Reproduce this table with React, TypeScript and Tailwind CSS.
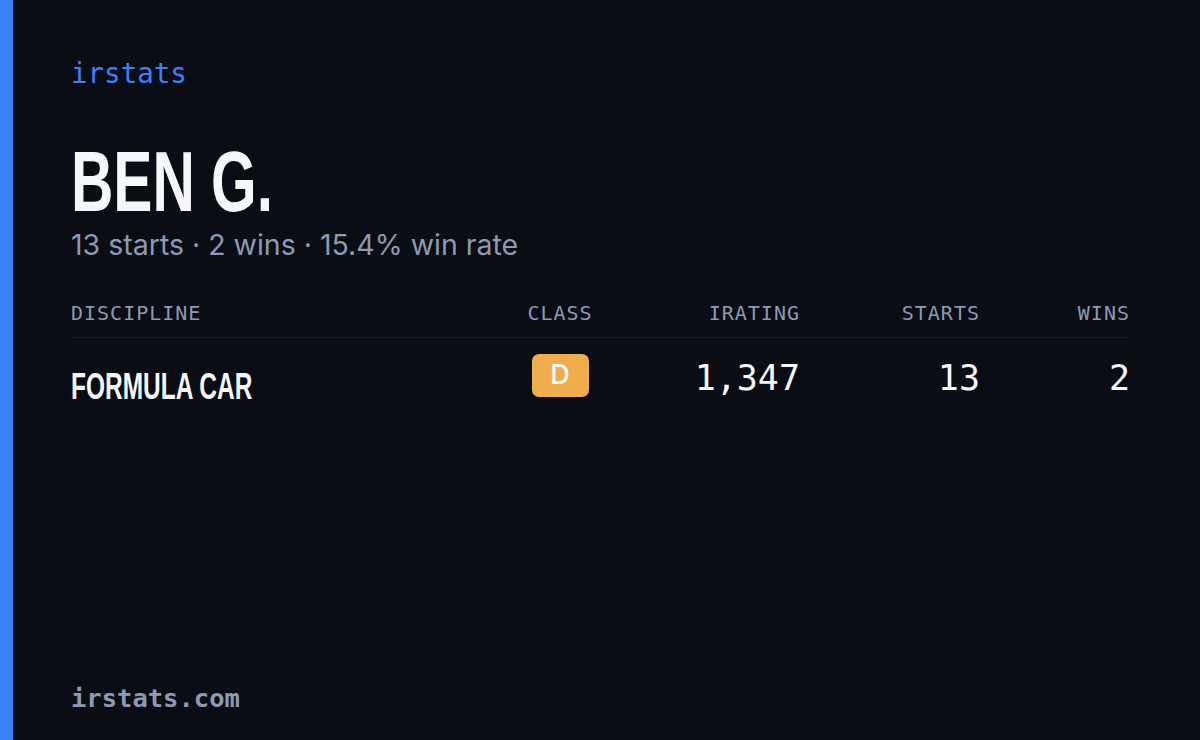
const mono = { fontFamily: '"DejaVu Sans Mono", "Liberation Mono", monospace' };
const cond = { fontFamily: '"Liberation Sans", Arial, sans-serif' };
const sans = { fontFamily: 'Inter, "Noto Sans", sans-serif' };

const rows = [{ discipline: "FORMULA CAR", cls: "D", irating: "1,347", starts: "13", wins: "2" }];

export default function App() {
  return (
    <div className="w-[1200px] h-[740px] flex bg-[#0a0d14] overflow-hidden">
      <div className="w-[13px] h-full bg-[#3b82f6]" />
      <div className="flex-1 flex flex-col pl-[58px] pr-[70px] pt-[55px] pb-[26px]">
        <div className="text-[27.5px] leading-[36px] text-[#3b82f6]" style={mono}>
          irstats
        </div>

        <h1 className="mt-[46px] h-[90px] text-[85px] leading-[90px] font-bold text-[#f5f7fb]" style={cond}>
          <span className="inline-block origin-left scale-x-[0.69] whitespace-nowrap">BEN G.</span>
        </h1>
        <p className="mt-[1px] text-[28.5px] leading-[34px] text-[#8d9ab1]" style={sans}>
          13 starts · 2 wins · 15.4% win rate
        </p>

        <div className="mt-[38px]">
          <div
            className="grid grid-cols-[1fr_130px_175px_180px_150px] items-center pb-[11px] border-b border-[#181c27] text-[20px] leading-[26px] tracking-[1px] text-[#8d9ab1]"
            style={mono}
          >
            <div>DISCIPLINE</div>
            <div className="text-center">CLASS</div>
            <div className="text-right">IRATING</div>
            <div className="text-right">STARTS</div>
            <div className="text-right">WINS</div>
          </div>
          {rows.map((r) => (
            <div key={r.discipline} className="grid grid-cols-[1fr_130px_175px_180px_150px] items-center pt-[16px]">
              <div className="pt-[11px] h-[60px] text-[36px] leading-[44px] font-bold text-[#f5f7fb]" style={cond}>
                <span className="inline-block origin-left scale-x-[0.68] whitespace-nowrap">{r.discipline}</span>
              </div>
              <div className="flex justify-center self-start">
                <span
                  className="w-[57px] h-[43px] rounded-[7px] bg-[#f0ad4e] flex items-center justify-center text-[27px] font-medium text-white"
                  style={sans}
                >
                  {r.cls}
                </span>
              </div>
              <div className="self-start text-right text-[35px] leading-[48px] text-[#f5f7fb]" style={mono}>
                {r.irating}
              </div>
              <div className="self-start text-right text-[35px] leading-[48px] text-[#f5f7fb]" style={mono}>
                {r.starts}
              </div>
              <div className="self-start text-right text-[35px] leading-[48px] text-[#f5f7fb]" style={mono}>
                {r.wins}
              </div>
            </div>
          ))}
        </div>

        <div className="mt-auto text-[25.5px] leading-[32px] font-bold text-[#8d9ab1]" style={mono}>
          irstats.com
        </div>
      </div>
    </div>
  );
}
